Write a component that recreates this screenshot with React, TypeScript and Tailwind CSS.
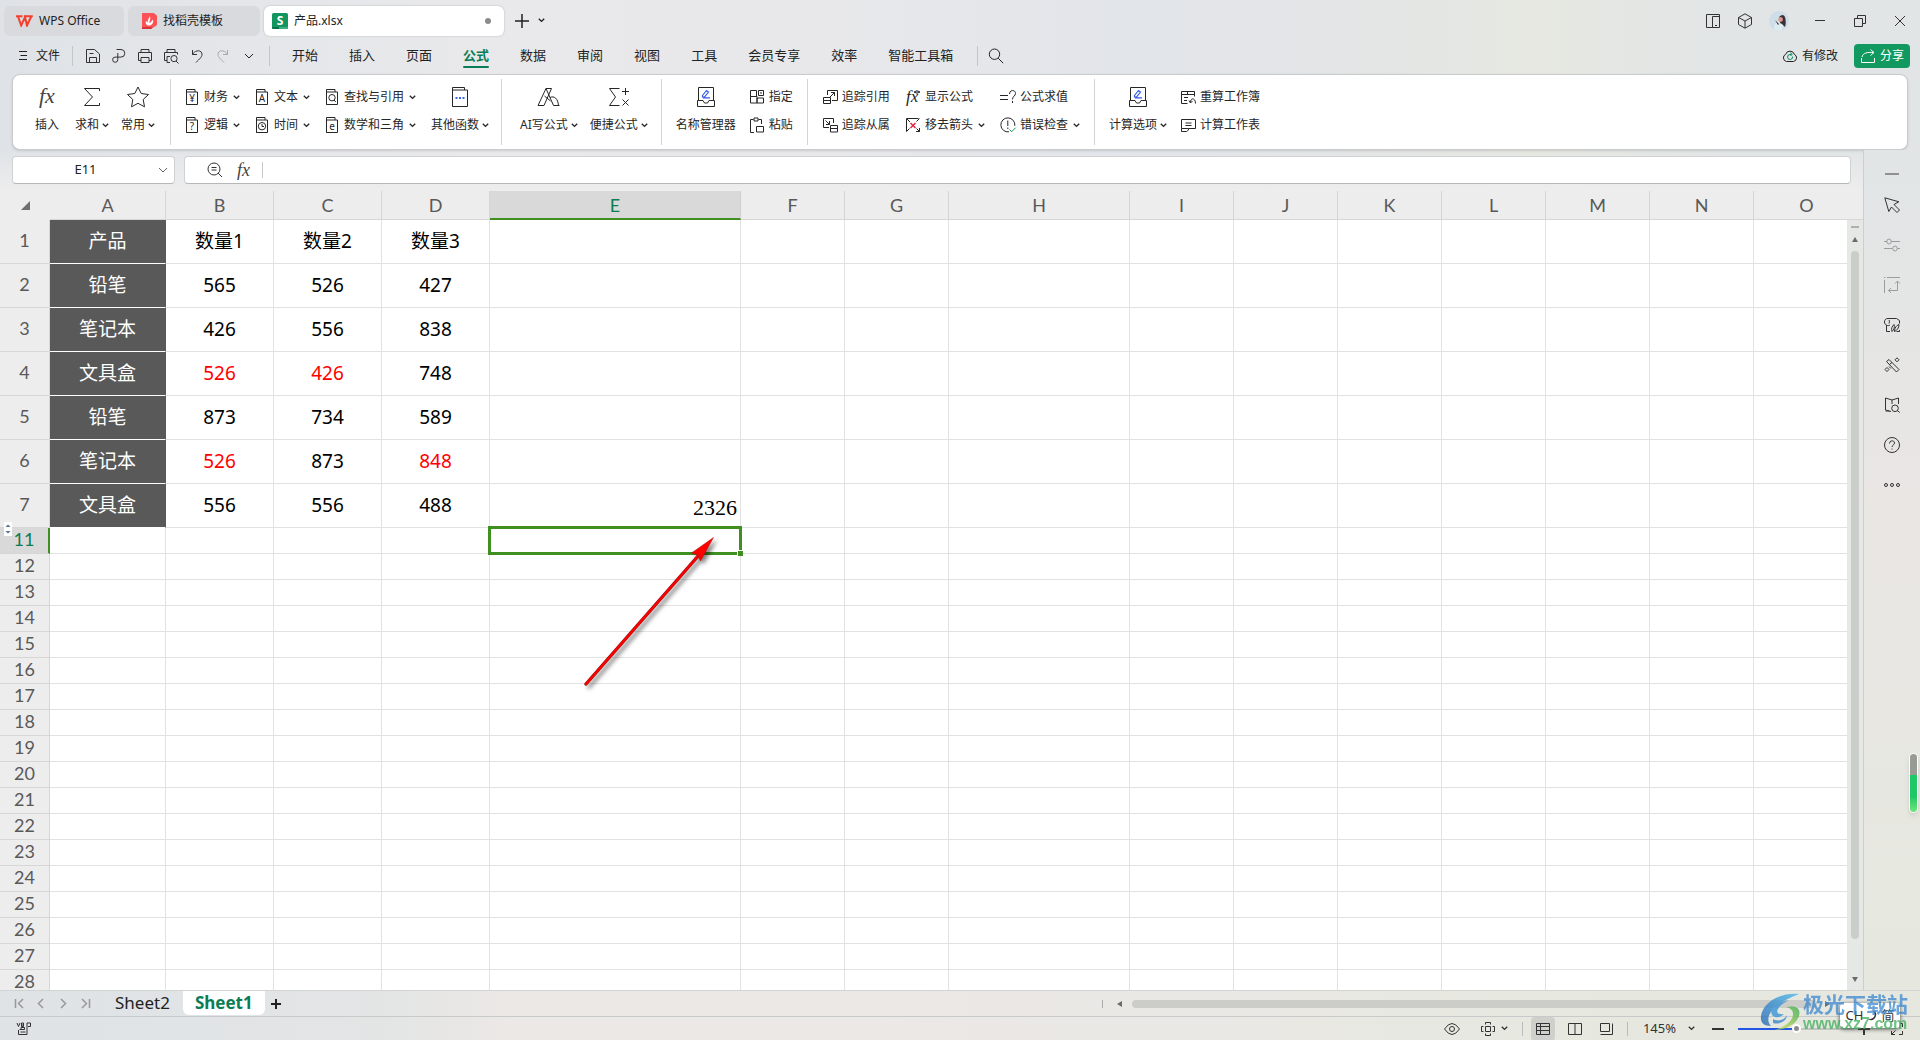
import { ReactNode } from "react";

interface IconProps {
  w?: number;
  h?: number;
  d?: string;
  className?: string;
  children?: ReactNode;
}

function Icon({ w = 16, h = 16, d, className = "", children }: IconProps) {
  return (
    <svg
      width={w}
      height={h}
      viewBox={`0 0 ${w} ${h}`}
      fill="none"
      stroke="currentColor"
      className={"shrink-0 overflow-visible " + className}
      aria-hidden="true"
    >
      {d && <path d={d} />}
      {children}
    </svg>
  );
}

function Chevron() {
  return (
    <Icon w={7} h={5}>
      <path d="M0.8 0.8 3.5 3.4 6.2 0.8" strokeWidth="1.4" />
    </Icon>
  );
}

// Folder-like book used by the function categories
function Book({ children }: { children: ReactNode }) {
  return (
    <Icon w={15} h={18} d="M1.5 16.5v-15h8.5v2.5 M1.5 4h11v12.5h-11z">
      {children}
    </Icon>
  );
}

function BookLetter({ letter }: { letter: string }) {
  return (
    <Book>
      <text
        x="7"
        y="14"
        fontSize="10"
        textAnchor="middle"
        fill="currentColor"
        stroke="none"
        fontFamily="Noto Sans, sans-serif"
      >
        {letter}
      </text>
    </Book>
  );
}

function FxIcon() {
  return (
    <svg width="20" height="26" viewBox="0 0 20 26" className="shrink-0 overflow-visible" aria-hidden="true">
      <text x="2" y="19" fontSize="22" fontStyle="italic" fill="#444" fontFamily="Liberation Serif, serif">
        fx
      </text>
    </svg>
  );
}

function EditBoxIcon() {
  return (
    <Icon w={20} h={20} d="M2.5 13.5v-13h15v13 M1.5 13.5h5.5l1.5 2.5h3l1.5-2.5h5.5v6h-17z">
      <path d="M6.5 8.5 10.5 3.5l2 1.5-4 5h-2z M7 10.8h7" stroke="#2f5bea" strokeWidth="1.2" />
    </Icon>
  );
}

interface ToolProps {
  icon: ReactNode;
  label: string;
  menu?: boolean;
  className?: string;
}

function BigTool({ icon, label, menu, className = "" }: ToolProps) {
  return (
    <button className={"flex flex-col items-center " + className}>
      <span className="flex h-7 items-center">{icon}</span>
      <span className="flex h-7 items-center gap-[3px] whitespace-nowrap">
        {label}
        {menu && <Chevron />}
      </span>
    </button>
  );
}

function SmallTool({ icon, label, menu }: ToolProps) {
  return (
    <button className="flex h-7 items-center whitespace-nowrap">
      {icon}
      <span className="ml-1">{label}</span>
      {menu && (
        <span className="ml-[5px]">
          <Chevron />
        </span>
      )}
    </button>
  );
}

interface GroupProps {
  children: ReactNode;
  last?: boolean;
  className?: string;
}

function Group({ children, last, className = "px-[14px] gap-[13px]" }: GroupProps) {
  return (
    <div className={"my-1 flex pt-1 " + (last ? "" : "border-r border-[#d4d4d4] ") + className}>{children}</div>
  );
}

function TitleBar() {
  return (
    <div className="flex h-10 items-center justify-between pt-px text-xs text-[#222]">
      <div className="flex items-center gap-1 pl-1">
        <button className="flex h-[30px] w-[120px] items-center gap-[6px] rounded-md bg-[#d8dadd] pl-3">
          <svg width="17" height="12" viewBox="0 0 17 12" fill="none" aria-hidden="true">
            <path d="M0 1.2h6.5M2 1.5l3.2 9L9 2.2l2 8.3L15.2 1.5M8 1.2h8.8" stroke="#f4402c" strokeWidth="2" />
          </svg>
          WPS Office
        </button>
        <button className="flex h-[30px] w-[132px] items-center gap-[6px] rounded-md bg-[#d8dadd] pl-[14px]">
          <svg width="15" height="16" viewBox="0 0 15 16" aria-hidden="true">
            <path d="M0 0h7a7.5 7.5 0 0 1 4 14.5L9 16H0z" fill="#fa5257" />
            <path d="M0 14h11l-2 2H0z" fill="#d8343a" />
            <path d="M7.5 3c2 3-.5 4.5 0 7 1 0 2-2 3.5-3.5 1 4-2 6-4 6S3 11 4 8c1 .5 1 1.5 2 1.5C5 7 7.5 5.5 7.5 3z" fill="#fff" />
          </svg>
          找稻壳模板
        </button>
        <button className="flex h-[30px] w-60 items-center gap-[6px] rounded-md bg-white pl-2 shadow-[0_0_2px_#b0b0b0]">
          <svg width="16" height="16" viewBox="0 0 16 16" aria-hidden="true">
            <rect width="16" height="16" rx="1.5" fill="#12955f" />
            <path d="M0 14h16v.5a1.5 1.5 0 0 1-1.5 1.5h-13A1.5 1.5 0 0 1 0 14.5z" fill="#0b7347" />
            <path d="M7 14h9v2H7z" fill="#3dae81" />
            <text x="8" y="12" fontSize="12" fontWeight="700" textAnchor="middle" fill="#fff" fontFamily="Noto Sans, sans-serif">
              S
            </text>
          </svg>
          产品.xlsx
          <span className="ml-auto mr-[13px] size-[6px] rounded-full bg-[#8c8c8c]" />
        </button>
        <button aria-label="新建" className="ml-[6px]">
          <Icon d="M8 1v14M1 8h14" className="[stroke-width:1.5]" />
        </button>
        <button aria-label="标签列表" className="ml-1">
          <Chevron />
        </button>
      </div>
      <div className="flex items-center pr-3 text-[#333]">
        <button aria-label="侧栏">
          <Icon d="M1.5 1.5h13v13h-13z M7.5 14.5v-11h7 M10 12.5h2" />
        </button>
        <button aria-label="应用" className="ml-4">
          <Icon d="M8 .8l6.5 3.7v7L8 15.2l-6.5-3.7v-7z M1.5 4.5 8 8l6.5-3.5M8 8v7" />
        </button>
        <button aria-label="账号" className="ml-4">
          <svg width="20" height="20" viewBox="0 0 20 20" aria-hidden="true">
            <circle cx="10" cy="10" r="10" fill="#cfdde8" />
            <path d="M5 18c0-5 3-8 6-8l3 4-1 5.5q-5 1-8-1.5z" fill="#dcecf0" />
            <path d="M10 6q4-4 6 0c1 4 1 7 0 10l-3-3-2-1z" fill="#3b2f38" />
            <path d="M6 9l4 4-1 1z" fill="#3b2f38" />
            <circle cx="11.5" cy="8.5" r="2.4" fill="#d99a92" />
          </svg>
        </button>
        <button aria-label="最小化" className="ml-[23px]">
          <Icon d="M3 7.5h10" />
        </button>
        <button aria-label="还原" className="ml-6">
          <Icon d="M2.5 5.5h8v8h-8z M5.5 5.5v-3h8v8h-3" />
        </button>
        <button aria-label="关闭" className="ml-6">
          <Icon d="M3 3l10 10M13 3 3 13" />
        </button>
      </div>
    </div>
  );
}

const menus = ["开始", "插入", "页面", "公式", "数据", "审阅", "视图", "工具", "会员专享", "效率", "智能工具箱"];

const quickIcons = [
  { name: "保存", d: "M1.5 14.5v-13h8l5 4.5v8.5z M4.5 14.5v-5h7v5 M4.5 5.5h4" },
  { name: "输出为PDF", d: "M5.5 1.5h4.5a3.8 3.8 0 0 1 0 7.6H4a2.6 2.6 0 1 0 2.8 2.6V5" },
  { name: "打印", d: "M4 4.5V1.5h8v3 M4 12.5H1.5v-8h13v8H12 M4 9.5h8v5H4z" },
  { name: "打印预览", d: "M4 4.5V1.5h8v3 M4 12.5H1.5v-8h13v2 M4 8.5v6h3 M4 8.5h3 M11 7.5a3 3 0 1 1 0 6.2a3 3 0 1 1 0-6.2 M13 13l2.500 2.500" },
  { name: "撤销", d: "M3.5 2v4.500H8 M3.5 6.500C5 3 11 1 12.8 5c1.2 3.5-2.5 6-5.8 9.5" },
];

function MenuBar() {
  return (
    <div className="flex h-[34px] items-center pb-[2px] text-[13px] text-[#222]">
      <button className="ml-[18px] flex items-center gap-2 text-xs">
        <Icon w={10} h={12} d="M1 1.5h8M2.5 5.5h6.5M1 9.5h8" />
        文件
      </button>
      <span className="ml-3 mr-[7px] h-5 w-px bg-[#c4c6c8]" />
      {quickIcons.map((q) => (
        <button key={q.name} aria-label={q.name} className="flex w-[26px] justify-center text-[#333]">
          <Icon d={q.d} />
        </button>
      ))}
      <button aria-label="恢复" className="flex w-[26px] justify-center text-[#a8aaac]">
        <Icon d="M12.5 2v4.5H8 M12.5 6.5C11 3 5 1 3.2 5c-1.2 3.5 2.5 6 5.8 9.5" />
      </button>
      <button aria-label="更多" className="flex w-[26px] justify-center">
        <Icon w={10} h={7} d="M1 1l4 4 4-4" />
      </button>
      <span className="ml-[7px] h-5 w-px bg-[#c4c6c8]" />
      <nav className="ml-[22px] flex h-full gap-[31px]">
        {menus.map((m) =>
          m === "公式" ? (
            <button key={m} className="relative font-bold text-[#0b7d54]">
              {m}
              <span className="absolute inset-x-0 bottom-1 h-[2px] rounded bg-[#0b7d54]" />
            </button>
          ) : (
            <button key={m}>{m}</button>
          )
        )}
      </nav>
      <span className="ml-6 mr-[10px] h-5 w-px bg-[#c4c6c8]" />
      <button aria-label="搜索">
        <Icon d="M6.5 1a5.200 5.200 0 1 1 0 10.400a5.200 5.200 0 1 1 0-10.400 M10.200 10.200l5 5" />
      </button>
      <button className="ml-auto flex items-center gap-1 text-xs">
        <Icon d="M4.500 13.500a3.800 3.800 0 0 1-.8-7.200a4.500 4.500 0 0 1 8.600 0a3.800 3.800 0 0 1-.8 7.200z">
          <path d="M10.5 8.5a2.5 2.5 0 1 1-2.5-2h1.5M8.5 4.5l1.5 2-1.5 1.5" stroke="#0b8f5e" />
        </Icon>
        有修改
      </button>
      <button className="ml-4 mr-[10px] flex h-6 w-14 items-center justify-center gap-1 rounded bg-[#12995f] text-xs text-white">
        <Icon d="M1.5 10v4.5h13V10 M2 9c1-4 5-5 11.5-4.5 M10.5 1.5l3.5 3-3.5 3" />
        分享
      </button>
    </div>
  );
}

function Ribbon() {
  return (
    <div className="mx-3 flex h-[76px] rounded-lg border border-[#c9cbcc] bg-white pl-3 text-xs text-[#262626] shadow-sm">
      <Group className="pr-[9px]">
        <BigTool className="w-11" icon={<FxIcon />} label="插入" />
        <BigTool className="w-[46px]" menu icon={<Icon w={20} h={20} d="M17.500 4V1.500h-15l8 8.500-8 8.500h15V16" />} label="求和" />
        <BigTool
          className="w-[46px]"
          menu
          icon={<Icon w={24} h={22} d="M12 1l3.2 6.500 7.300 1-5.300 5 1.300 7.300L12 17.300l-6.500 3.500 1.300-7.300-5.300-5 7.300-1z" />}
          label="常用"
        />
      </Group>
      <Group className="gap-[15px] pl-[14px] pr-3">
        <div>
          <SmallTool icon={<BookLetter letter="¥" />} label="财务" menu />
          <SmallTool icon={<BookLetter letter="?" />} label="逻辑" menu />
        </div>
        <div>
          <SmallTool icon={<BookLetter letter="A" />} label="文本" menu />
          <SmallTool
            icon={
              <Book>
                <path d="M7 6.500a3.700 3.700 0 1 1 0 7.400a3.700 3.700 0 1 1 0-7.400 M7 8v2.500h2" />
              </Book>
            }
            label="时间"
            menu
          />
        </div>
        <div>
          <SmallTool
            icon={
              <Book>
                <path d="M7 6.500a3.200 3.200 0 1 1 0 6.400a3.200 3.200 0 1 1 0-6.400 M9 12l1.800 2" />
              </Book>
            }
            label="查找与引用"
            menu
          />
          <SmallTool icon={<BookLetter letter="e" />} label="数学和三角" menu />
        </div>
        <BigTool
          menu
          icon={
            <Icon w={18} h={22} d="M1.5 20.5v-19h12v2.5 M1.5 4h15v16.5h-15z">
              <path d="M4.5 12h2M8 12h2M11.5 12h2" stroke="#3a66ea" strokeWidth="2" />
            </Icon>
          }
          label="其他函数"
        />
      </Group>
      <Group className="gap-3 pl-[18px] pr-[13px]">
        <BigTool menu icon={<Icon w={24} h={20} d="M1 18.5 9 1.5h5.5l-7.5 17z M9 1.5l7.5 17h6 M7.5 9l6 5 M13 10.5c4-2 8 1 8.5 8" />} label="AI写公式" />
        <BigTool menu icon={<Icon w={22} h={20} d="M11.5 1.5h-10l6 8.5-6 8.5h10 M17.5 1v7M14 4.5h7 M14.5 12.5l6 6M20.5 12.5l-6 6" />} label="便捷公式" />
      </Group>
      <Group>
        <BigTool icon={<EditBoxIcon />} label="名称管理器" />
        <div>
          <SmallTool icon={<Icon d="M1.5 1.5h6v6h-6z M1.5 7.5v6.5h6.5v-6.5z M8 9v5h6.5V9z M9.5 1.5h5v5h-5z M11 4h2" />} label="指定" />
          <SmallTool icon={<Icon d="M5 15.5H1.5v-13h3 M5 1h4v3H5z M9.5 2.5h3V7 M7.5 9.5h7v5.5h-7z" />} label="粘贴" />
        </div>
      </Group>
      <Group className="gap-[15px] px-[14px]">
        <div>
          <SmallTool icon={<Icon d="M5.5 6V1.5h10v10H10 M1.5 8.5h7v6h-7z M1.5 11.5h7 M8 8l4.5-4.5M9 3.5h3.5V7" />} label="追踪引用" />
          <SmallTool icon={<Icon d="M7 10.5H1.5v-9h10V6 M8.5 8.5h7v6.5h-7z M8.5 11.5h7 M3.5 3.5 7.5 7.5M7.5 4v3.5H4" />} label="追踪从属" />
        </div>
        <div>
          <SmallTool
            icon={
              <Icon>
                <text x="1" y="13" fontSize="17" fontStyle="italic" fill="currentColor" stroke="none" fontFamily="Liberation Serif, serif">
                  fx
                </text>
                <path d="M9 3q3-2.5 6 0q-3 2.5-6 0M12 2.5v1" />
              </Icon>
            }
            label="显示公式"
          />
          <SmallTool
            icon={
              <Icon d="M1.5 14.5v-13h12 M2 2l3 3 M1.5 14.5l3-3 M14.5 1.5l-3 3 M11.5 11.5l3 3 M14.5 11v3.5H11">
                <path d="M5.5 6l5 5M10.5 6l-5 5" stroke="#e0284a" strokeWidth="1.5" />
              </Icon>
            }
            label="移去箭头"
            menu
          />
        </div>
        <div>
          <SmallTool icon={<Icon d="M0 6.5h8M0 10.5h8 M9.5 5c0-4.5 6-4.5 6-.5c0 2.5-3 2.5-3 6M12.5 12v2" />} label="公式求值" />
          <SmallTool
            icon={
              <Icon d="M9 14.8a7 7 0 1 1 5.800-6 M7.800 3.500v5.500M7.800 10.500v1.500">
                <path d="M9.500 12.500l2.200 2.200 4-4" stroke="#0b9a62" />
              </Icon>
            }
            label="错误检查"
            menu
          />
        </div>
      </Group>
      <Group last>
        <BigTool menu icon={<EditBoxIcon />} label="计算选项" />
        <div>
          <SmallTool icon={<Icon d="M7.5 14.5h-6v-12h13v5 M1.5 5.5h13M7.5 2.5v3 M4 8.5h4M4 11.5h3 M9 11.5l1.5 2.5 2-2 M10.5 13.5c0-5 5-5 5 1" />} label="重算工作簿" />
          <SmallTool icon={<Icon d="M1.5 11.5v-9h14v9h-7 M1.5 11.5h7v1.5l-2 1.5h-5z M5.5 6h6M5.5 8.5h6" />} label="计算工作表" />
        </div>
      </Group>
    </div>
  );
}

function FormulaBar() {
  return (
    <div className="flex gap-[9px] bg-linear-to-b from-transparent to-[#ededed] pb-[7px] pl-3 pr-3 pt-[6px]">
      <div className="flex h-7 w-[163px] items-center rounded border border-[#cfd1d2] border-b-[#b5b7b8] bg-white pr-[6px]">
        <input
          aria-label="名称框"
          defaultValue="E11"
          className="w-full min-w-0 bg-transparent text-center text-[13px] text-[#222] outline-none"
        />
        <Icon w={10} h={7} d="M1 1l4 4 4-4" className="text-[#666]" />
      </div>
      <div className="flex h-7 flex-1 items-center rounded border border-[#cfd1d2] border-b-[#b5b7b8] bg-white pl-[22px] text-[#333]">
        <Icon d="M7 1a6 6 0 1 1 0 12a6 6 0 1 1 0-12 M11 11l4 4 M4.5 5.5h5M4.5 8h5" />
        <span className="ml-[14px] font-['Liberation_Serif',serif] text-lg leading-6 text-[#444] italic">fx</span>
        <span className="ml-3 h-4 w-px bg-[#c8c8c8]" />
        <input aria-label="编辑栏" className="min-w-0 flex-1 bg-transparent px-2 text-[13px] outline-none" />
      </div>
    </div>
  );
}

const columns = [
  { name: "A", width: 116 },
  { name: "B", width: 108 },
  { name: "C", width: 108 },
  { name: "D", width: 108 },
  { name: "E", width: 251 },
  { name: "F", width: 104 },
  { name: "G", width: 104 },
  { name: "H", width: 181 },
  { name: "I", width: 104 },
  { name: "J", width: 104 },
  { name: "K", width: 104 },
  { name: "L", width: 104 },
  { name: "M", width: 104 },
  { name: "N", width: 104 },
];

const data = [
  ["产品", "数量1", "数量2", "数量3"],
  ["铅笔", "565", "526", "427"],
  ["笔记本", "426", "556", "838"],
  ["文具盒", "526", "426", "748"],
  ["铅笔", "873", "734", "589"],
  ["笔记本", "526", "873", "848"],
  ["文具盒", "556", "556", "488"],
];

const redCells = ["B4", "C4", "B6", "D6"];

const emptyRows = Array.from({ length: 18 }, (_, i) => i + 11);

function Selection() {
  return (
    <>
      <div className="absolute -inset-x-[2px] -inset-y-[2px] border-[3px] border-[#3f8f21]" />
      <div className="absolute -bottom-[3px] -right-[3px] size-[6px] border-l border-t border-white bg-[#3f8f21]" />
      <svg
        className="absolute left-[85px] top-0 drop-shadow-[3px_3px_2px_rgba(0,0,0,0.5)]"
        width="150"
        height="170"
        viewBox="0 0 150 170"
        aria-hidden="true"
      >
        <path d="M11 156 124 27" stroke="#8d1515" strokeWidth="3.4" strokeLinecap="round" />
        <path d="M11 156 124 27" stroke="#fe0000" strokeWidth="2.4" strokeLinecap="round" />
        <path d="M138.5 9.5 116.5 25l6 2 3 6z" fill="#fe0000" stroke="#b01010" strokeWidth="0.5" />
      </svg>
    </>
  );
}

function Grid() {
  return (
    <div className="min-w-0 flex-1 overflow-hidden bg-white">
      <table className="w-full table-fixed border-separate border-spacing-0 font-['Noto_Sans','Noto_Sans_CJK_SC',sans-serif] text-[19px] leading-5">
        <colgroup>
          <col className="w-[50px]" />
          {columns.map((c) => (
            <col key={c.name} style={{ width: c.width }} />
          ))}
          <col />
        </colgroup>
        <thead className="font-[Lato,sans-serif] text-lg leading-5 text-[#595959]">
          <tr className="h-[29px] bg-[#ededed]">
            <th className="p-0">
              <svg width="9" height="9" viewBox="0 0 9 9" className="mx-auto" aria-hidden="true">
                <path d="M9 0v9H0z" fill="#6e6e6e" />
              </svg>
            </th>
            {columns.map((c) =>
              c.name === "E" ? (
                <th key={c.name} className="border-b-2 border-r border-b-[#3f8f21] border-r-[#d0d0d0] bg-[#d9d9d9] p-0 font-normal text-[#0b7d54]">
                  E
                </th>
              ) : (
                <th key={c.name} className="border-b border-r border-[#d6d6d6] p-0 font-normal">
                  {c.name}
                </th>
              )
            )}
            <th className="border-b border-[#d6d6d6] p-0 pl-3 font-normal">O</th>
          </tr>
        </thead>
        <tbody>
          {data.map((row, r) => (
            <tr key={r} className="h-11">
              <th className="border-b border-r border-[#d6d6d6] bg-[#ededed] p-0 pb-[3px] font-[Lato,sans-serif] text-lg leading-5 font-normal text-[#595959]">
                {r + 1}
              </th>
              <td className="border-b border-r border-b-white border-r-[#595959] bg-[#595959] p-0 pb-[2px] text-center text-white">{row[0]}</td>
              {row.slice(1).map((value, c) => (
                <td
                  key={c}
                  className={
                    "border-b border-r border-[#e2e2e2] p-0 pb-[2px] text-center " +
                    (redCells.includes("BCD"[c] + (r + 1)) ? "text-[#ff0000]" : "text-black")
                  }
                >
                  {value}
                </td>
              ))}
              {columns.slice(4).map((c) => (
                <td
                  key={c.name}
                  className="border-b border-r border-[#e2e2e2] p-0 pr-[3px] pt-1 text-right font-['Liberation_Serif',serif] text-[22px]"
                >
                  {c.name === "E" && r === 6 ? "2326" : ""}
                </td>
              ))}
              <td className="border-b border-[#e2e2e2] p-0" />
            </tr>
          ))}
          {emptyRows.map((n) => (
            <tr key={n} className="h-[26px]">
              {n === 11 ? (
                <th className="relative border-b border-r-2 border-b-[#d6d6d6] border-r-[#3f8f21] bg-[#d9d9d9] p-0 pb-[3px] font-[Lato,sans-serif] text-lg leading-5 font-normal text-[#0b7d54]">
                  11
                  <svg width="8" height="14" viewBox="0 0 8 14" className="absolute -top-[6px] left-1" aria-hidden="true">
                    <path d="M0 0h8v14H0z" fill="#fff" />
                    <path d="M1.5 5 4 2.500 6.500 5zM1.500 9 4 11.500 6.500 9z" fill="#5f6f8a" />
                  </svg>
                </th>
              ) : (
                <th className="border-b border-r border-[#d6d6d6] bg-[#ededed] p-0 pb-[3px] font-[Lato,sans-serif] text-lg leading-5 font-normal text-[#595959]">
                  {n}
                </th>
              )}
              {columns.map((c) =>
                n === 11 && c.name === "E" ? (
                  <td key={c.name} className="relative z-10 border-b border-r border-[#e2e2e2] p-0">
                    <Selection />
                  </td>
                ) : (
                  <td key={c.name} className="border-b border-r border-[#e2e2e2] p-0" />
                )
              )}
              <td className="border-b border-[#e2e2e2] p-0" />
            </tr>
          ))}
        </tbody>
      </table>
    </div>
  );
}

function VerticalScroll() {
  return (
    <div className="flex w-4 flex-col items-center bg-[#e6e8e6]">
      <div className="h-[29px] w-full border-b border-[#d6d6d6] bg-[#ededed]" />
      <span className="mt-[6px] h-[2px] w-2 bg-[#b0b0b0]" />
      <svg width="6" height="5" viewBox="0 0 6 5" className="mt-[9px]" aria-hidden="true">
        <path d="M0 5 3 0l3 5z" fill="#6b6b6b" />
      </svg>
      <div className="mb-[38px] mt-[9px] w-2 flex-1 rounded bg-[#cbcdca]" />
      <svg width="6" height="5" viewBox="0 0 6 5" className="mb-2" aria-hidden="true">
        <path d="M0 0h6L3 5z" fill="#6b6b6b" />
      </svg>
    </div>
  );
}

const sideTools = [
  { name: "选择", d: "M.8 .8l14 4-4.800 2.700 5.500 5.500-2.500 2.500-5.500-5.500-2.700 4.500z" },
  { name: "属性", dim: true, d: "M0 4.5h3 M7 4.5h9 M5 2a2.2 2.5 0 1 1 0 5a2.2 2.5 0 1 1 0-5 M0 11.5h8.5 M13.5 11.5H16 M11 9a2.2 2.5 0 1 1 0 5a2.2 2.5 0 1 1 0-5" },
  { name: "区域", dim: true, d: "M.5 3v13 M3 .5h13 M0 .5h1.5 M13.5 4v9.5h-9 M11 6.5 13.5 4l2.5 2.5 M7 11l-2.5 2.5L7 16" },
  { name: "美化", d: "M5 6.5q1-2 0-3.5 M6 8c-2 1.500-5.500 0-5.500-3c0-2.500 1.500-3.500 3.500-3.500h8.500l3 2v3 M2.500 8v6.500h3.500 M8 14.500c-1-3 0-5 2-7c1 3 0 5-2 7 M10.500 14.500c0-4 2-6 4.500-7c0 3.500-2 6-4.500 7 M12.500 14.500h3v-1.500" },
  { name: "魔法", d: "M2.5 4.5l2.5-2 10 10-2.5 2.5z M5.5 7.5l2.5-2 M13 .8l2 2-2 2-2-2z M3 10.5l2 2-2 2-2-2z M5 9.5l2 2" },
  { name: "查找", d: "M7 14.5l-5.5-1.5v-12l6.5 2 6.5-2v6 M8 3v4 M1.500 14h4 M11 8a3.300 3.300 0 1 1 0 6.600a3.300 3.300 0 1 1 0-6.600 M13.300 13.500l2.500 2" },
  { name: "帮助", d: "M8 .5a7.500 7.500 0 1 1 0 15a7.500 7.500 0 1 1 0-15 M5.500 6.500c0-3.500 5-3.500 5-.5c0 2-2.500 2-2.500 4M8 11.500v1" },
  { name: "更多", d: "M2 6.500a1.500 1.500 0 1 1 0 3a1.500 1.500 0 1 1 0-3 M8 6.500a1.500 1.500 0 1 1 0 3a1.500 1.500 0 1 1 0-3 M14 6.500a1.500 1.500 0 1 1 0 3a1.500 1.500 0 1 1 0-3" },
];

function SidePanel() {
  return (
    <aside className="relative flex w-[57px] flex-col items-center border-l border-[#cdcfce] bg-linear-to-b from-[#e1e5e6] via-[#e9e6e4] via-40% to-[#e6e8df] pt-[23px]">
      <span className="h-[2px] w-[14px] bg-[#8f9192]" />
      <div className="mt-[10px] flex flex-col">
        {sideTools.map((t) => (
          <button
            key={t.name}
            aria-label={t.name}
            className={"flex h-10 items-center " + (t.dim ? "text-[#9a9c9d]" : "text-[#333]")}
          >
            <Icon d={t.d} />
          </button>
        ))}
      </div>
      <div className="absolute bottom-[177px] right-[2px] flex h-[60px] w-[9px] flex-col overflow-hidden rounded-full border border-white shadow-md">
        <div className="h-[21px] bg-[#989a94]" />
        <div className="flex-1 bg-linear-to-b from-[#1fc866] from-60% to-[#6be87c]" />
      </div>
    </aside>
  );
}

function SheetTabs() {
  return (
    <div className="flex h-[26px] items-center border-t border-[#d2d4d4] font-['Noto_Sans',sans-serif] text-[17px] leading-5 text-[#222]">
      <div className="flex items-center gap-[11px] pl-[14px] text-[#999]">
        <button aria-label="第一张">
          <Icon w={11} h={11} d="M1.5 1v9 M9 1 4.5 5.5 9 10" className="[stroke-width:1.5]" />
        </button>
        <button aria-label="上一张">
          <Icon w={11} h={11} d="M7 1 2.5 5.5 7 10" className="[stroke-width:1.5]" />
        </button>
        <button aria-label="下一张">
          <Icon w={11} h={11} d="M3 1l4.5 4.5L3 10" className="[stroke-width:1.5]" />
        </button>
        <button aria-label="最后一张">
          <Icon w={11} h={11} d="M2 1l4.5 4.5L2 10 M9.5 1v9" className="[stroke-width:1.5]" />
        </button>
      </div>
      <button className="mb-[2px] ml-[21px] px-[3px]">Sheet2</button>
      <button className="mb-[2px] ml-[10px] h-6 rounded-b-md bg-white px-3 font-bold text-[#0b7d54]">Sheet1</button>
      <button aria-label="新建工作表" className="ml-[6px]">
        <Icon w={10} h={10} d="M5 0v10M0 5h10" className="[stroke-width:2]" />
      </button>
      <div className="ml-auto flex w-[43%] items-center pl-2 pr-[90px]">
        <span className="h-2 w-px bg-[#aaa]" />
        <svg width="5" height="6" viewBox="0 0 5 6" className="ml-[14px] mr-[10px]" aria-hidden="true">
          <path d="M5 0v6L0 3z" fill="#6b6b6b" />
        </svg>
        <div className="h-2 flex-1 rounded bg-[#cccdc8]" />
        <svg width="5" height="6" viewBox="0 0 5 6" className="ml-2" aria-hidden="true">
          <path d="M0 0v6l5-3z" fill="#6b6b6b" />
        </svg>
      </div>
    </div>
  );
}

function StatusBar() {
  return (
    <footer className="flex h-6 items-center border-t border-[#c8caca] pr-4 text-[#333]">
      <button aria-label="宏" className="ml-4">
        <Icon d="M1 2l1.500 3.500L4 2 M5.500 2v3.500h2V4h-2 M7.500 4V2h-2 M3.500 8.500h5v-2H5v2 M2.500 9v4.500h8.500V2h3.500v3.500h-2.500 M4.500 11h5" />
      </button>
      <button aria-label="护眼" className="ml-auto">
        <Icon d="M.5 8q7.5-11 15 0q-7.5 11-15 0z M8 5.5a2.5 2.5 0 1 1 0 5a2.5 2.5 0 1 1 0-5" />
      </button>
      <button aria-label="阅读模式" className="ml-5 flex items-center gap-[5px]">
        <Icon d="M5.5 5.5h5v5h-5z M5.5 3.5v-2h5v2 M5.5 12.5v2h5v-2 M3.5 5.5h-2v5h2 M12.5 5.5h2v5h-2" />
        <Chevron />
      </button>
      <span className="mx-2 ml-[14px] h-[14px] w-px bg-[#bbb]" />
      <button aria-label="普通视图" className="flex h-6 w-6 items-center justify-center rounded bg-[#cfd0cc]">
        <Icon d="M1.5 2.5h13v11h-13z M1.5 5.5h13M1.5 9.5h13M5.5 2.5v11" />
      </button>
      <button aria-label="分页预览" className="ml-3">
        <Icon d="M1.5 2.5h13v11h-13z M8 2.5v11" />
      </button>
      <button aria-label="页面布局" className="ml-4">
        <Icon d="M1.5 2.5h9v8h-9z M13.5 2.5v11h-12" />
      </button>
      <span className="mx-3 h-[14px] w-px bg-[#bbb]" />
      <button className="ml-[3px] flex items-center gap-3 text-[13px]">
        145%
        <Chevron />
      </button>
      <button aria-label="缩小" className="ml-[17px]">
        <Icon w={12} h={12} d="M0 6h12" className="[stroke-width:2]" />
      </button>
      <input
        type="range"
        aria-label="显示比例"
        min={0}
        max={100}
        defaultValue={50}
        className="ml-[14px] h-[2px] w-[116px] appearance-none bg-linear-to-r from-[#2456e6] from-50% to-[#c4c5c2] to-50% [&::-webkit-slider-thumb]:size-[9px] [&::-webkit-slider-thumb]:appearance-none [&::-webkit-slider-thumb]:rounded-full [&::-webkit-slider-thumb]:border-2 [&::-webkit-slider-thumb]:border-white [&::-webkit-slider-thumb]:bg-[#8a8a8a]"
      />
      <button aria-label="放大" className="ml-1">
        <Icon w={12} h={12} d="M0 6h12M6 0v12" className="[stroke-width:2]" />
      </button>
      <button aria-label="全屏" className="ml-5">
        <Icon w={14} h={14} d="M9 1.5h3.5V5 M12.5 9v3.5H9 M5 12.5H1.5V9 M1.5 12.5l4-4" />
      </button>
    </footer>
  );
}

// Input method indicator and site mark floating over the bottom right corner
function CornerOverlay() {
  return (
    <>
      <div className="absolute bottom-3 right-5 z-20 flex h-[25px] w-[60px] items-center justify-center gap-1 rounded bg-white text-[13px] text-[#333] shadow-[0_1px_4px_#444]">
        CH
        <svg width="10" height="12" viewBox="0 0 10 12" aria-hidden="true">
          <path d="M5 0c4 3 4 9-4 9.500 6 3 10-4 7.500-7.500z" fill="#333" />
        </svg>
        简
      </div>
      <div className="absolute bottom-2 right-3 z-20 flex items-center opacity-75">
        <svg width="44" height="40" viewBox="0 0 44 40" aria-hidden="true">
          <defs>
            <linearGradient id="swooshBlue" x1="0" y1="1" x2="1" y2="0">
              <stop offset="0" stopColor="#1c5fb0" />
              <stop offset="1" stopColor="#41b6ee" />
            </linearGradient>
            <linearGradient id="swooshGreen" x1="0" y1="1" x2="1" y2="0">
              <stop offset="0" stopColor="#d9e04a" />
              <stop offset="1" stopColor="#2ea84c" />
            </linearGradient>
          </defs>
          <path d="M40 2C22 0 4 10 2 24c-1 7 3 10 10 10C6 28 8 14 40 2z" fill="url(#swooshBlue)" />
          <path d="M30 8c-14 3-20 10-17 15 3 4 10 2 12-1-6 1-8-2-6-5 2-4 7-7 11-9z" fill="#2f8fd8" />
          <path d="M27 15c10-2 15 1 13 9-3 9-15 14-24 14 12-4 18-10 18-16 0-4-3-6-7-7z" fill="url(#swooshGreen)" />
          <path d="M14 27c5 3 12 1 14-4 0 6-8 10-14 8z" fill="#2f7fca" />
        </svg>
        <div className="flex flex-col text-[21px] leading-6 font-bold text-[#3b87cf]">
          极光下载站
          <span className="font-['Liberation_Sans',sans-serif] text-base leading-4 text-[#3fae5c]">www.xz7.com</span>
        </div>
      </div>
    </>
  );
}

export default function App() {
  return (
    <div className="relative flex h-screen flex-col overflow-hidden bg-[linear-gradient(to_right,#dfe3e7,#e9e9eb_25%,#e8e8ea_42%,#e2e5ea_58%,#e3e5e6_70%,#e6e8e1_80%,#e1e5e6_90%)] font-['Noto_Sans','Noto_Sans_CJK_SC',sans-serif]">
      <TitleBar />
      <MenuBar />
      <Ribbon />
      <div className="flex min-h-0 flex-1">
        <div className="flex min-w-0 flex-1 flex-col">
          <FormulaBar />
          <div className="flex min-h-0 flex-1">
            <Grid />
            <VerticalScroll />
          </div>
        </div>
        <SidePanel />
      </div>
      <div className="bg-[linear-gradient(to_right,#dfe3e6,#e3e5e5_20%,#ece8e5_27%,#eae8e5_60%,#e6e8df_85%,#e6e8df)]">
        <SheetTabs />
        <StatusBar />
      </div>
      <CornerOverlay />
    </div>
  );
}
